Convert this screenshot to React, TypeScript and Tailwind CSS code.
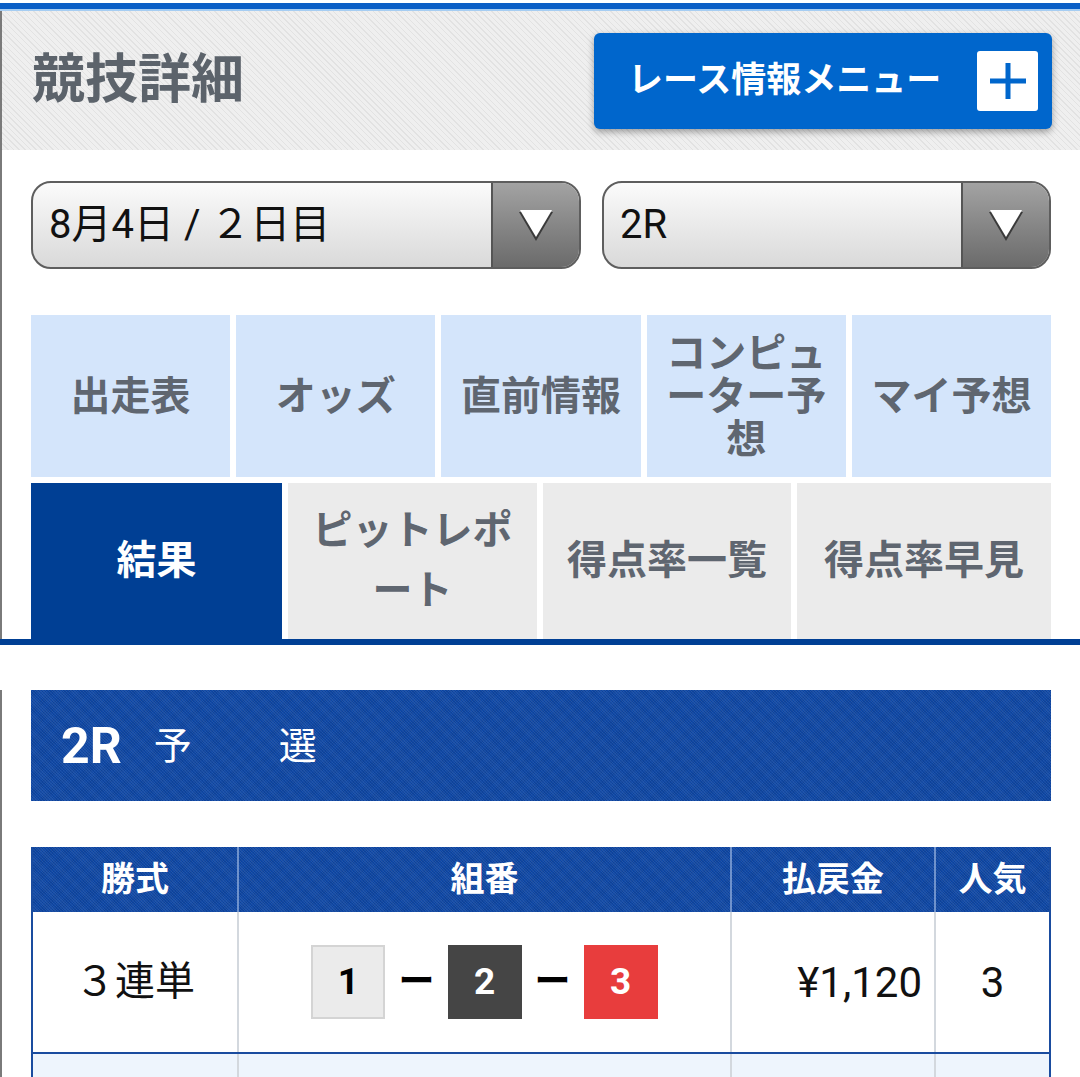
import React from "react";

function Arrow() {
  return (
    <svg width="40" height="36" viewBox="0 0 40 36">
      <polygon points="3,5 37,5 20,34" fill="#3a3a3a" />
      <polygon points="4,3 36,3 20,30" fill="#ffffff" />
    </svg>
  );
}

function Select({ label, className }: { label: string; className: string }) {
  return (
    <div
      className={`flex h-[88px] overflow-hidden rounded-[20px] border-2 border-[#5e5e5e] bg-gradient-to-b from-[#fbfbfb] to-[#d9d9d9] ${className}`}
    >
      <div className="flex flex-1 items-center pl-[16px] text-[40px] text-[#111]">{label}</div>
      <div className="flex w-[88px] items-center justify-center border-l-2 border-[#555] bg-gradient-to-b from-[#a3a3a3] to-[#6b6b6b]">
        <Arrow />
      </div>
    </div>
  );
}

const row1: React.ReactNode[] = [
  "出走表",
  "オッズ",
  "直前情報",
  <>
    コンピュ
    <br />
    ーター予
    <br />想
  </>,
  "マイ予想",
];

export default function App() {
  return (
    <div className="w-[1080px] min-h-[1077px] overflow-hidden bg-white font-['Roboto','Noto_Sans_CJK_JP',sans-serif]">
      <div className="h-[3px] bg-white" />
      <div className="h-[6px] bg-[#0a5fc6]" />
      <div className="h-[2px] bg-[#a6cdf2]" />
      <div className="border-l-2 border-[#7a7a7a]">
        {/* header */}
        <div className="flex h-[139px] items-center justify-between bg-[#efefef] bg-[repeating-linear-gradient(45deg,#e2e2e2_0px,#e2e2e2_1px,transparent_1px,transparent_4px)] pl-[30px] pr-[28px]">
          <h1 className="text-[53px] font-bold leading-none text-[#5c636b]">競技詳細</h1>
          <div className="flex h-[96px] w-[458px] items-center justify-between rounded-[6px] bg-[#0066cc] pl-[34px] pr-[14px] shadow-[0_3px_7px_rgba(0,0,0,0.35)]">
            <span className="text-[35px] font-bold leading-none text-white">レース情報メニュー</span>
            <div className="flex h-[60px] w-[61px] items-center justify-center rounded-[3px] bg-white">
              <svg width="38" height="38" viewBox="0 0 38 38">
                <rect x="16.5" y="1" width="5" height="36" fill="#0066cc" />
                <rect x="1" y="16.5" width="36" height="5" fill="#0066cc" />
              </svg>
            </div>
          </div>
        </div>

        <div className="px-[29px]">
          {/* selects */}
          <div className="mt-[31px] flex gap-[21px]">
            <Select label="8月4日 / ２日目" className="w-[550px]" />
            <Select label="2R" className="flex-1" />
          </div>

          {/* tabs row 1 */}
          <div className="mt-[46px] flex gap-[6px]">
            {row1.map((t, i) => (
              <div
                key={i}
                className="flex h-[162px] min-w-0 flex-1 basis-0 items-center justify-center bg-[#d4e5fb] text-center text-[40px] font-bold leading-[43px] text-[#5f6670]"
              >
                <span>{t}</span>
              </div>
            ))}
          </div>
          {/* tabs row 2 */}
          <div className="mt-[6px] flex gap-[6px]">
            <div className="flex h-[156px] w-[251px] shrink-0 items-center justify-center bg-[#003f94] text-[40px] font-bold text-white">
              結果
            </div>
            <div className="flex h-[156px] w-[249px] shrink-0 items-center justify-center bg-[#ebebeb] text-center text-[40px] font-bold leading-[60px] text-[#5f6670]">
              <span>
                ピットレポ
                <br />
                ート
              </span>
            </div>
            <div className="flex h-[156px] w-[248px] shrink-0 items-center justify-center bg-[#ebebeb] text-[40px] font-bold text-[#5f6670]">
              得点率一覧
            </div>
            <div className="flex h-[156px] min-w-0 flex-1 items-center justify-center bg-[#ebebeb] text-[40px] font-bold text-[#5f6670]">
              得点率早見
            </div>
          </div>
        </div>
      </div>
      <div className="h-[6px] bg-[#003f94]" />

      <div className="border-l-2 border-[#7a7a7a] px-[29px] pb-[40px]">
        {/* race title */}
        <div className="mt-[45px] flex h-[111px] items-center bg-[#0f48a6] bg-[repeating-linear-gradient(45deg,rgba(255,255,255,0.07)_0px,rgba(255,255,255,0.07)_1px,transparent_1px,transparent_2px),repeating-linear-gradient(-45deg,rgba(0,0,0,0.08)_0px,rgba(0,0,0,0.08)_1px,transparent_1px,transparent_2px)] pl-[30px] text-white">
          <span className="text-[50px] font-bold leading-none">2R</span>
          <span className="ml-[32px] text-[38px] leading-none">予</span>
          <span className="ml-[87px] text-[38px] leading-none">選</span>
        </div>

        {/* table */}
        <div className="mt-[46px] border-x-2 border-[#1a4c9f]">
          <div className="flex h-[65px] bg-[#0f48a6] bg-[repeating-linear-gradient(45deg,rgba(255,255,255,0.07)_0px,rgba(255,255,255,0.07)_1px,transparent_1px,transparent_2px),repeating-linear-gradient(-45deg,rgba(0,0,0,0.08)_0px,rgba(0,0,0,0.08)_1px,transparent_1px,transparent_2px)] text-[34px] font-bold text-white">
            <div className="flex w-[206px] items-center justify-center border-r-2 border-[#6f92cc]">勝式</div>
            <div className="flex w-[493px] items-center justify-center border-r-2 border-[#6f92cc]">組番</div>
            <div className="flex w-[204px] items-center justify-center border-r-2 border-[#6f92cc]">払戻金</div>
            <div className="flex flex-1 items-center justify-center">人気</div>
          </div>
          <div className="flex h-[140px] bg-white text-[40px] text-[#111]">
            <div className="flex w-[206px] items-center justify-center border-r-2 border-[#d3d8de]">３連単</div>
            <div className="flex w-[493px] items-center justify-center gap-[13px] border-r-2 border-[#d3d8de]">
              <div className="flex h-[74px] w-[74px] items-center justify-center border-2 border-[#d4d4d4] bg-[#ebebeb] text-[37px] font-bold text-black">
                1
              </div>
              <span className="text-[36px] font-bold text-black">ー</span>
              <div className="flex h-[74px] w-[74px] items-center justify-center bg-[#454545] text-[37px] font-bold text-white">
                2
              </div>
              <span className="text-[36px] font-bold text-black">ー</span>
              <div className="flex h-[74px] w-[74px] items-center justify-center bg-[#e83d3d] text-[37px] font-bold text-white">
                3
              </div>
            </div>
            <div className="flex w-[204px] items-center justify-end border-r-2 border-[#d3d8de] pr-[12px] text-[42px]">¥1,120</div>
            <div className="flex flex-1 items-center justify-center text-[42px]">3</div>
          </div>
          <div className="flex h-[140px] border-t-2 border-[#1a4c9f] bg-[#eef5fd]">
            <div className="w-[206px] border-r-2 border-[#d3d8de]" />
            <div className="w-[493px] border-r-2 border-[#d3d8de]" />
            <div className="w-[204px] border-r-2 border-[#d3d8de]" />
            <div className="flex-1" />
          </div>
        </div>
      </div>
    </div>
  );
}
